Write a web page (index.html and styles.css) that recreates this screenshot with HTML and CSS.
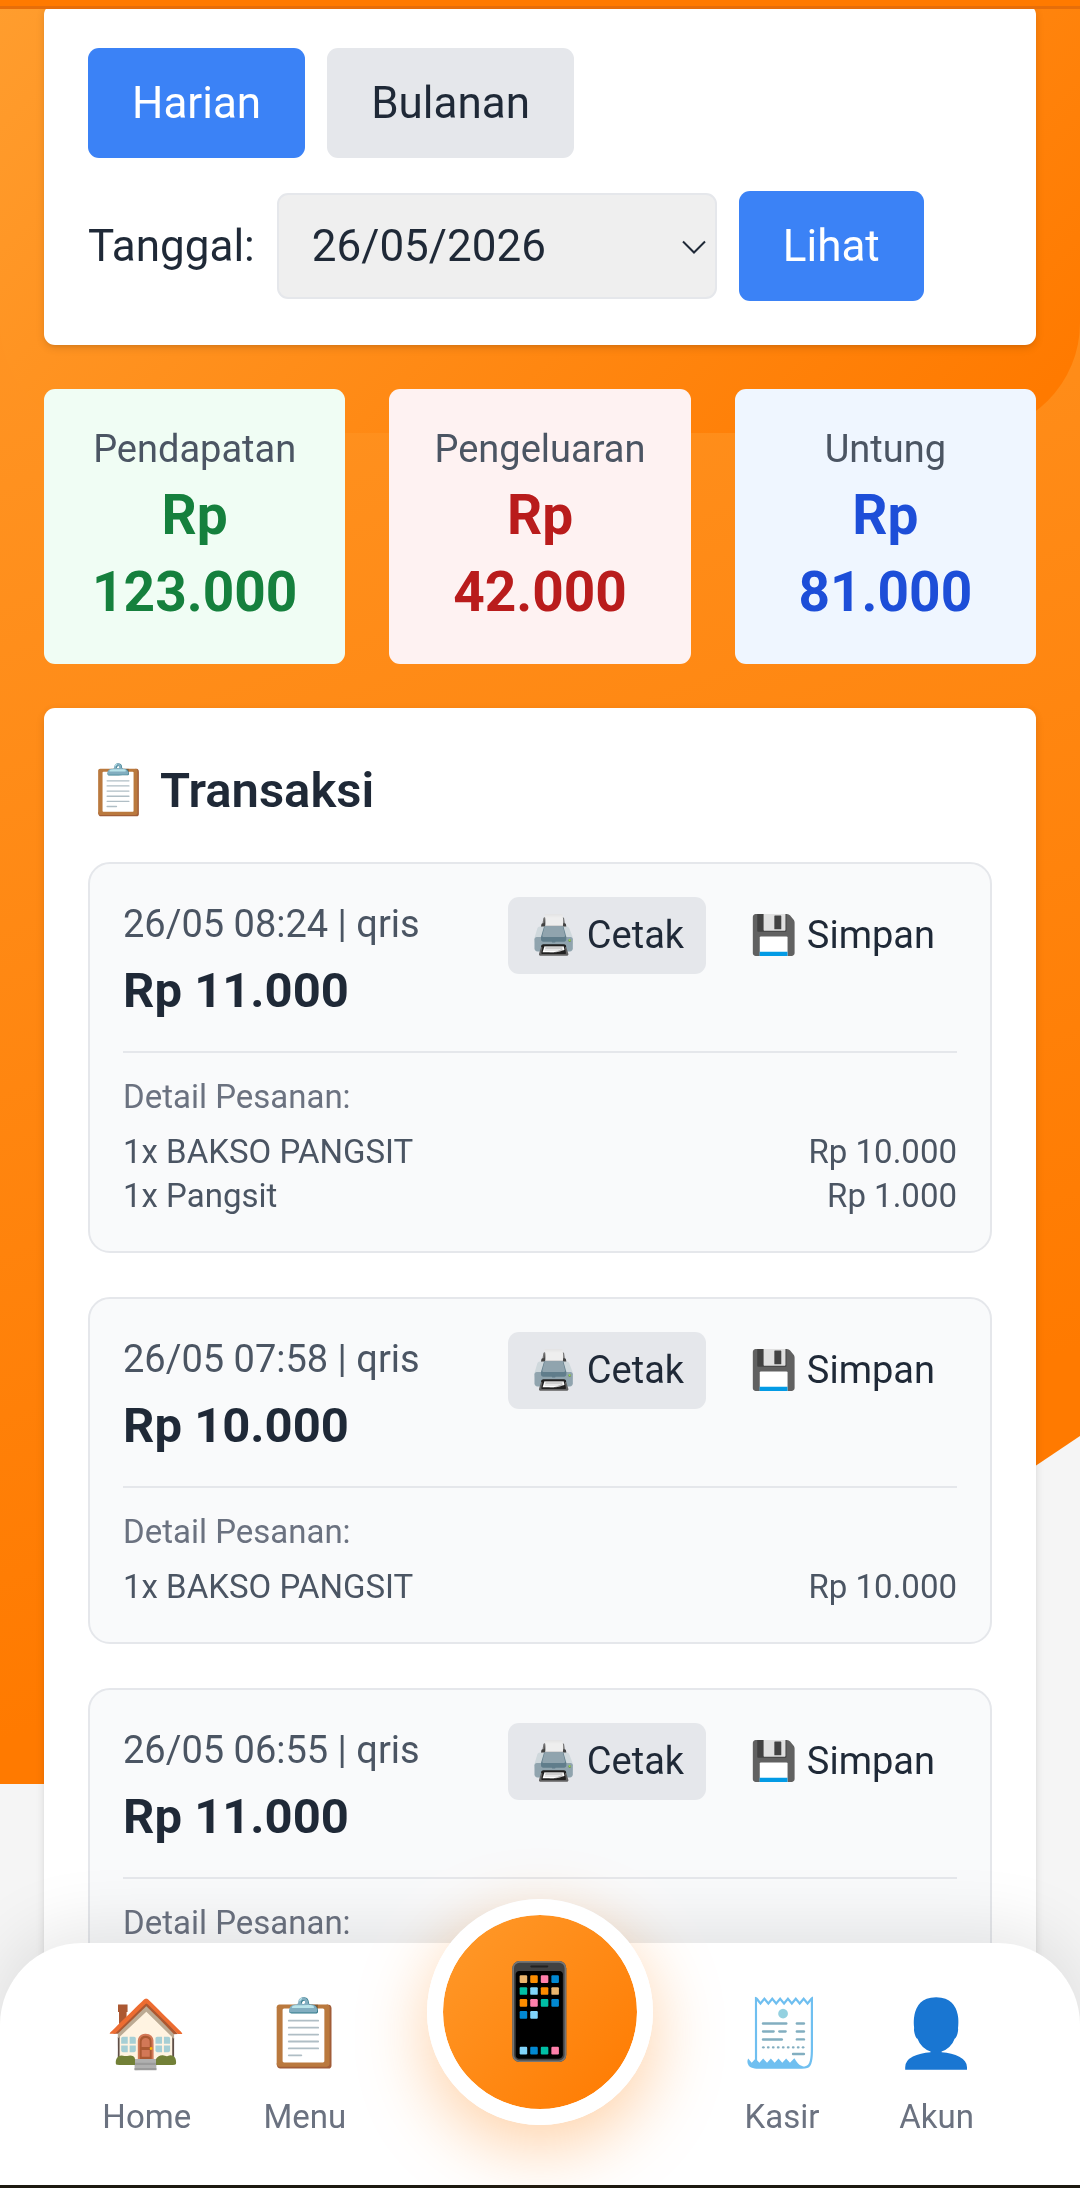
FILE: index.html
```html
<!DOCTYPE html>
<html lang="id">
<head>
  <meta charset="utf-8">
  <meta name="viewport" content="width=device-width, initial-scale=1">
  <title>Laporan Transaksi</title>
  <link rel="stylesheet" href="styles.css">
</head>
<body>
  <div class="backdrop"></div>
  <div class="hero"></div>
  <header class="topbar"></header>

  <main class="content">
    <form class="panel filter">
      <div class="filter-row">
        <button type="button" class="btn btn-primary">Harian</button>
        <button type="button" class="btn btn-muted">Bulanan</button>
      </div>
      <div class="filter-row">
        <label for="tanggal">Tanggal:</label>
        <span class="select">
          <select id="tanggal" name="tanggal">
            <option selected>26/05/2026</option>
            <option>25/05/2026</option>
          </select>
          <svg class="chevron" viewBox="0 0 26 14" aria-hidden="true"><path d="M2 1.500l11 11 11-11"/></svg>
        </span>
        <button type="button" class="btn btn-primary">Lihat</button>
      </div>
    </form>

    <section class="stats">
      <div class="stat stat-income"><p class="stat-label">Pendapatan</p><p class="stat-value">Rp 123.000</p></div>
      <div class="stat stat-expense"><p class="stat-label">Pengeluaran</p><p class="stat-value">Rp 42.000</p></div>
      <div class="stat stat-profit"><p class="stat-label">Untung</p><p class="stat-value">Rp 81.000</p></div>
    </section>

    <section class="panel list">
      <h2 class="list-title">📋 Transaksi</h2>

      <article class="trx">
        <div class="trx-head">
          <div>
            <p class="trx-meta">26/05 08:24 | qris</p>
            <p class="trx-total">Rp 11.000</p>
          </div>
          <div class="trx-actions">
            <button type="button" class="action action-print">🖨️ Cetak</button>
            <button type="button" class="action">💾 Simpan</button>
          </div>
        </div>
        <div class="trx-detail">
          <p class="detail-title">Detail Pesanan:</p>
          <ul class="detail-items">
            <li><span>1x BAKSO PANGSIT</span><span>Rp 10.000</span></li>
            <li><span>1x Pangsit</span><span>Rp 1.000</span></li>
          </ul>
        </div>
      </article>

      <article class="trx">
        <div class="trx-head">
          <div>
            <p class="trx-meta">26/05 07:58 | qris</p>
            <p class="trx-total">Rp 10.000</p>
          </div>
          <div class="trx-actions">
            <button type="button" class="action action-print">🖨️ Cetak</button>
            <button type="button" class="action">💾 Simpan</button>
          </div>
        </div>
        <div class="trx-detail">
          <p class="detail-title">Detail Pesanan:</p>
          <ul class="detail-items">
            <li><span>1x BAKSO PANGSIT</span><span>Rp 10.000</span></li>
          </ul>
        </div>
      </article>

      <article class="trx">
        <div class="trx-head">
          <div>
            <p class="trx-meta">26/05 06:55 | qris</p>
            <p class="trx-total">Rp 11.000</p>
          </div>
          <div class="trx-actions">
            <button type="button" class="action action-print">🖨️ Cetak</button>
            <button type="button" class="action">💾 Simpan</button>
          </div>
        </div>
        <div class="trx-detail">
          <p class="detail-title">Detail Pesanan:</p>
        </div>
      </article>
    </section>
  </main>

  <nav class="nav">
    <a class="nav-item" href="#home"><span class="nav-icon">🏠</span><span>Home</span></a>
    <a class="nav-item" href="#menu"><span class="nav-icon">📋</span><span>Menu</span></a>
    <span class="nav-slot"><a class="fab" href="#pos" aria-label="Pesan">📱</a></span>
    <a class="nav-item" href="#kasir"><span class="nav-icon">🧾</span><span>Kasir</span></a>
    <a class="nav-item" href="#akun"><span class="nav-icon">👤</span><span>Akun</span></a>
  </nav>
</body>
</html>
```
FILE: styles.css
```css
*,
*::before,
*::after {
  box-sizing: border-box;
}

body {
  margin: 0;
  height: 100vh;
  overflow: hidden;
  background: #f5f5f5;
  color: #1f2937;
  font: 44px/66px Roboto, "Noto Color Emoji", sans-serif;
}

p,
h2,
ul {
  margin: 0;
  padding: 0;
}

button,
select {
  font: inherit;
  color: inherit;
}

a {
  color: inherit;
  text-decoration: none;
}

/* Orange background with a slanted lower-right edge */
.backdrop {
  position: fixed;
  inset: 0 0 auto;
  height: 1784px;
  background: linear-gradient(160deg, #ff9a2b, #ff7a00 80%);
  clip-path: polygon(0 0, 100% 0, 100% 1436px, 52% 100%, 0 100%);
}

.hero {
  position: fixed;
  inset: 0 0 auto;
  height: 433px;
  border-radius: 0 0 110px 110px;
  background: linear-gradient(135deg, #ff9d2e, #ff7a00 95%);
}

.topbar {
  position: fixed;
  inset: 0 0 auto;
  z-index: 2;
  height: 9px;
  background: #ff7a00;
  border-bottom: 3px solid #e66e0a;
}

.content {
  position: relative;
  display: flex;
  flex-direction: column;
  gap: 44px;
  height: 100%;
  padding: 4px 44px 0;
  overflow-y: auto;
  scrollbar-width: none;
}

.panel {
  flex: none;
  padding: 44px;
  border-radius: 11px;
  background: #fff;
  box-shadow: 0 3px 8px rgba(0, 0, 0, 0.12), 0 3px 5px -3px rgba(0, 0, 0, 0.12);
}

.filter {
  display: flex;
  flex-direction: column;
  gap: 33px;
}

.filter-row {
  display: flex;
  align-items: center;
  gap: 22px;
}

.btn {
  padding: 22px 44px;
  border: 0;
  border-radius: 11px;
}

.btn-primary {
  background: #3b82f6;
  color: #fff;
}

.btn-muted {
  background: #e5e7eb;
}

.select {
  position: relative;
  display: flex;
}

.select select {
  appearance: none;
  width: 440px;
  height: 106px;
  padding: 0 33px;
  border: 2px solid #e5e7eb;
  border-radius: 11px;
  background: #efefef;
}

.chevron {
  position: absolute;
  top: 47px;
  right: 10px;
  width: 26px;
  height: 14px;
  fill: none;
  stroke: #1f2937;
  stroke-width: 2;
  pointer-events: none;
}

.stats {
  display: grid;
  grid-template-columns: repeat(3, 1fr);
  gap: 44px;
}

.stat {
  padding: 33px;
  border-radius: 11px;
  text-align: center;
}

.stat-label {
  color: #4b5563;
  font-size: 38px;
  line-height: 55px;
}

.stat-value {
  font-size: 55px;
  font-weight: 700;
  line-height: 77px;
}

.stat-income {
  background: #f0fdf4;
}

.stat-income .stat-value {
  color: #15803d;
}

.stat-expense {
  background: #fef2f2;
}

.stat-expense .stat-value {
  color: #b91c1c;
}

.stat-profit {
  background: #eff6ff;
}

.stat-profit .stat-value {
  color: #1d4ed8;
}

.list {
  display: flex;
  flex-direction: column;
  gap: 44px;
}

.list-title {
  margin-bottom: -11px;
  font-size: 49px;
  font-weight: 600;
  line-height: 77px;
}

.trx {
  padding: 33px;
  border: 2px solid #e5e7eb;
  border-radius: 22px;
  background: #f9fafb;
}

.trx-head {
  display: flex;
  align-items: flex-start;
  justify-content: space-between;
}

.trx-meta {
  color: #4b5563;
  font-size: 38px;
  line-height: 55px;
}

.trx-total {
  font-size: 49px;
  font-weight: 700;
  line-height: 77px;
}

.trx-actions {
  display: flex;
  gap: 22px;
}

.action {
  padding: 11px 22px;
  border: 0;
  border-radius: 11px;
  background: transparent;
  font-size: 38px;
  line-height: 55px;
}

.action-print {
  background: #e5e7eb;
}

.trx-detail {
  margin-top: 22px;
  padding-top: 22px;
  border-top: 2px solid #e5e7eb;
  font-size: 33px;
  line-height: 44px;
}

.detail-title {
  color: #6b7280;
}

.detail-items {
  margin-top: 11px;
  color: #4b5563;
  list-style: none;
}

.detail-items li {
  display: flex;
  justify-content: space-between;
}

.nav {
  position: fixed;
  inset: auto 0 0;
  z-index: 2;
  display: flex;
  align-items: flex-start;
  justify-content: space-evenly;
  height: 245px;
  padding: 46px 30px 0;
  border-bottom: 3px solid #1c1910;
  border-radius: 82px 82px 0 0;
  background: #fff;
  box-shadow: 0 -14px 69px rgba(0, 0, 0, 0.1);
}

.nav-item {
  display: flex;
  flex-direction: column;
  align-items: center;
  gap: 16px;
  color: #6b7280;
  font-size: 33px;
  line-height: 44px;
}

.nav-icon {
  font-size: 66px;
  line-height: 90px;
}

.nav-slot {
  width: 250px;
}

/* Raised centre button that overlaps the top edge of the bar */
.fab {
  position: absolute;
  top: -44px;
  left: 50%;
  display: flex;
  align-items: center;
  justify-content: center;
  width: 226px;
  height: 226px;
  margin-left: -113px;
  border: 16px solid #fff;
  border-radius: 50%;
  background: linear-gradient(135deg, #ff9a2b, #ff7a00) padding-box;
  box-shadow: 0 22px 69px rgba(255, 122, 0, 0.35);
  font-size: 92px;
  line-height: 110px;
}
```
